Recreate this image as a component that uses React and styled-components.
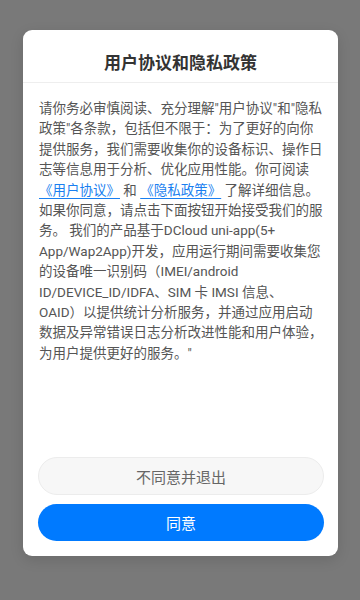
import React from "react";
import styled, { createGlobalStyle } from "styled-components";

const Global = createGlobalStyle`
  html, body { margin: 0; padding: 0; }
  body {
    background: #7a7a7a;
    font-family: "Noto Sans CJK SC", "Noto Sans", sans-serif;
  }
`;

const Screen = styled.div`
  width: 360px;
  height: 600px;
  background: #797979;
  display: flex;
  justify-content: center;
  padding-top: 30px;
  box-sizing: border-box;
`;

const Card = styled.div`
  width: 315px;
  height: 526px;
  background: #fff;
  border-radius: 9px;
  box-shadow: 0 4px 14px rgba(0, 0, 0, 0.12);
  display: flex;
  flex-direction: column;
  margin-left: 1px;
`;

const Header = styled.div`
  padding: 22px 0 10px;
  border-bottom: 1px solid #eeeeee;
  text-align: center;
`;

const Title = styled.h1`
  margin: 0;
  font-size: 17px;
  line-height: 20px;
  font-weight: 700;
  color: #333;
`;

const Body = styled.div`
  flex: 1;
  padding: 15px 0 0 16px;
  font-family: Roboto, "Noto Sans CJK SC", sans-serif;
  font-size: 13.5px;
  line-height: 20.4px;
  color: #555;
`;

const Line = styled.div`
  white-space: nowrap;
`;

const Link = styled.a`
  color: #1a7ff0;
  text-decoration: underline;
  text-underline-offset: 3px;
`;

const Actions = styled.div`
  display: flex;
  flex-direction: column;
  gap: 9px;
  padding: 0 14px 15px 15px;
`;

const Button = styled.button`
  height: ${(p) => (p.$primary ? "37px" : "38px")};
  border-radius: 19px;
  border: ${(p) => (p.$primary ? "none" : "1px solid #ececec")};
  background: ${(p) => (p.$primary ? "#007aff" : "#f7f7f7")};
  color: ${(p) => (p.$primary ? "#fff" : "#666")};
  font-family: "Noto Sans CJK SC", sans-serif;
  font-size: 15px;
  padding: 0;
`;

const before = [
  '请你务必审慎阅读、充分理解"用户协议"和"隐私',
  '政策"各条款，包括但不限于：为了更好的向你',
  "提供服务，我们需要收集你的设备标识、操作日",
  "志等信息用于分析、优化应用性能。你可阅读",
];

const after = [
  "如果你同意，请点击下面按钮开始接受我们的服",
  "务。 我们的产品基于DCloud uni-app(5+",
  "App/Wap2App)开发，应用运行期间需要收集您",
  "的设备唯一识别码（IMEI/android",
  "ID/DEVICE_ID/IDFA、SIM 卡 IMSI 信息、",
  "OAID）以提供统计分析服务，并通过应用启动",
  "数据及异常错误日志分析改进性能和用户体验，",
  '为用户提供更好的服务。"',
];

export default function App() {
  return (
    <>
      <Global />
      <Screen>
        <Card>
          <Header>
            <Title>用户协议和隐私政策</Title>
          </Header>
          <Body>
            {before.map((l) => (
              <Line key={l}>{l}</Line>
            ))}
            <Line>
              <Link> 《用户协议》</Link> 和 <Link> 《隐私政策》</Link> 了解详细信息。
            </Line>
            {after.map((l) => (
              <Line key={l}>{l}</Line>
            ))}
          </Body>
          <Actions>
            <Button>不同意并退出</Button>
            <Button $primary>同意</Button>
          </Actions>
        </Card>
      </Screen>
    </>
  );
}
